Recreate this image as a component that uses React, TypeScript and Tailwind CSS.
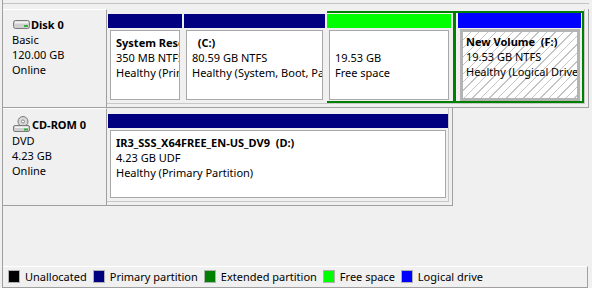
import React from "react";

// Disk Management, bottom pane

function DiskIcon() {
  return (
    <svg width="17" height="10" viewBox="0 0 17 10" className="shrink-0">
      <rect x="0.5" y="0.5" width="16" height="8" rx="2" fill="#cfcfcf" stroke="#7a7a7a" />
      <rect x="2" y="1.5" width="13" height="2" fill="#f2f2f2" />
      <rect x="11" y="5" width="4" height="2" fill="#38b038" />
    </svg>
  );
}

function CdIcon() {
  return (
    <svg width="18" height="17" viewBox="0 0 18 17" className="shrink-0">
      <ellipse cx="10" cy="5.5" rx="5" ry="5" fill="#d8d8d8" stroke="#7a7a7a" />
      <circle cx="10" cy="5.5" r="1.5" fill="#ffffff" stroke="#8a8a8a" />
      <rect x="0.5" y="9.5" width="16" height="6" rx="1.5" fill="#cfcfcf" stroke="#7a7a7a" />
      <rect x="2" y="10.5" width="13" height="1.5" fill="#f2f2f2" />
      <rect x="11" y="12.5" width="4" height="2" fill="#38b038" />
    </svg>
  );
}

function DiskLabel({ icon, name, lines }: { icon: React.ReactNode; name: string; lines: string[] }) {
  return (
    <div className="w-[104px] shrink-0 border-t border-white border-r border-b border-r-[#a0a0a0] border-b-[#a0a0a0] pl-[9px] pt-[7px]">
      <div className="flex items-center">
        <div className="ml-[1px] mr-[1px] flex">{icon}</div>
        <span className="font-bold">{name}</span>
      </div>
      {lines.map((l) => (
        <div key={l}>{l}</div>
      ))}
    </div>
  );
}

// each line is clipped at the box edge, like the real control does
function TextLines({ title, lines }: { title: string; lines: string[] }) {
  return (
    <div className="w-full">
      <div className="font-bold whitespace-pre overflow-hidden">{title}</div>
      {lines.map((l) => (
        <div key={l} className="whitespace-pre overflow-hidden">
          {l}
        </div>
      ))}
    </div>
  );
}

function Primary({ w, title, lines }: { w: string; title: string; lines: string[] }) {
  return (
    <div className={`${w} shrink-0 pt-[5px]`}>
      <div className="h-[14px] bg-[#000080]" />
      <div className="mx-[2px] mt-[2px] h-[70px] border border-[#a8a8a8] bg-white pl-[5px] pt-[4px] overflow-hidden">
        <TextLines title={title} lines={lines} />
      </div>
    </div>
  );
}

function LegendItem({ color, label }: { color: string; label: string }) {
  return (
    <div className="flex items-center gap-[5px]">
      <div className={`w-[12px] h-[13px] border border-[#b0b0b0] ${color}`} />
      <span className="leading-[13px]">{label}</span>
    </div>
  );
}

export default function App() {
  return (
    <div className="w-[592px] h-[288px] overflow-hidden bg-[#f0f0f0] text-[11px] leading-[15px] text-black font-['Noto_Sans',sans-serif] flex flex-col">
      <div className="ml-[2px] flex-1 border-l border-[#a0a0a0] flex flex-col">
        <div className="h-[4px] w-[586px] border-b border-[#c4c4c4]" />
        <div className="h-[5px]" />

        {/* Disk 0 */}
        <div className="flex h-[99px]">
          <DiskLabel icon={<DiskIcon />} name="Disk 0" lines={["Basic", "120.00 GB", "Online"]} />
          <div className="w-[482px] pr-[3px] pb-[3px] border-r border-b border-[#a0a0a0]">
            <div className="h-full border-r border-b border-[#c8c8c8] pl-[1px] flex gap-[2px]">
              <Primary w="w-[74px]" title="System Reserved" lines={["350 MB NTFS", "Healthy (Primary Partition)"]} />
              <Primary
                w="w-[141px]"
                title="  (C:)"
                lines={["80.59 GB NTFS", "Healthy (System, Boot, Page File, Active, Crash Dump, Primary Partition)"]}
              />
              {/* extended partition */}
              <div className="w-[257px] shrink-0 mt-[2px] h-[92px] border-y-2 border-[#008000] flex">
                <div className="w-[124px] shrink-0 pt-[1px]">
                  <div className="h-[14px] bg-[#00ff00]" />
                  <div className="mx-[2px] mt-[2px] h-[70px] border border-[#a8a8a8] bg-white pl-[5px] pt-[19px] overflow-hidden">
                    <div>19.53 GB</div>
                    <div>Free space</div>
                  </div>
                </div>
                <div className="w-[2px] shrink-0" />
                <div className="w-[131px] shrink-0 border-l-[3px] border-r-2 border-[#008000] -mt-[2px] -mb-[2px] pt-[2px]">
                  <div className="ml-[2px] mr-[1px] h-[15px] bg-[#0000ff]" />
                  <div className="ml-[4px] mr-[2px] mt-[1px] h-[72px] border-[3px] border-[#b4b4b4] bg-[repeating-linear-gradient(135deg,#ffffff_0px,#ffffff_5px,#c4c4c4_5px,#c4c4c4_6px)] pl-[3px] pt-[2px] overflow-hidden">
                    <TextLines title="New Volume  (F:)" lines={["19.53 GB NTFS", "Healthy (Logical Drive)"]} />
                  </div>
                </div>
              </div>
            </div>
          </div>
        </div>

        {/* CD-ROM 0 */}
        <div className="flex h-[98px]">
          <DiskLabel icon={<CdIcon />} name="CD-ROM 0" lines={["DVD", "4.23 GB", "Online"]} />
          <div className="w-[346px] pr-[3px] pb-[3px] border-r border-b border-[#a0a0a0]">
            <div className="h-full border-r border-b border-[#c8c8c8] pl-[1px] pt-[6px]">
              <div className="w-[340px]">
                <div className="h-[14px] bg-[#000080]" />
                <div className="mx-[2px] mt-[2px] h-[68px] border border-[#a8a8a8] bg-white pl-[5px] pt-[4px] overflow-hidden">
                  <TextLines
                    title="IR3_SSS_X64FREE_EN-US_DV9  (D:)"
                    lines={["4.23 GB UDF", "Healthy (Primary Partition)"]}
                  />
                </div>
              </div>
            </div>
          </div>
        </div>
        <div className="flex-1" />

        {/* legend */}
        <div className="w-[585px] h-[22px] border-t border-white border-r border-b border-r-[#a0a0a0] border-b-[#a0a0a0] pl-[5px] pt-[3px] flex items-start gap-[6px]">
          <LegendItem color="bg-black" label="Unallocated" />
          <LegendItem color="bg-[#000080]" label="Primary partition" />
          <LegendItem color="bg-[#008000]" label="Extended partition" />
          <LegendItem color="bg-[#00ff00]" label="Free space" />
          <LegendItem color="bg-[#0000ff]" label="Logical drive" />
        </div>
      </div>
    </div>
  );
}
